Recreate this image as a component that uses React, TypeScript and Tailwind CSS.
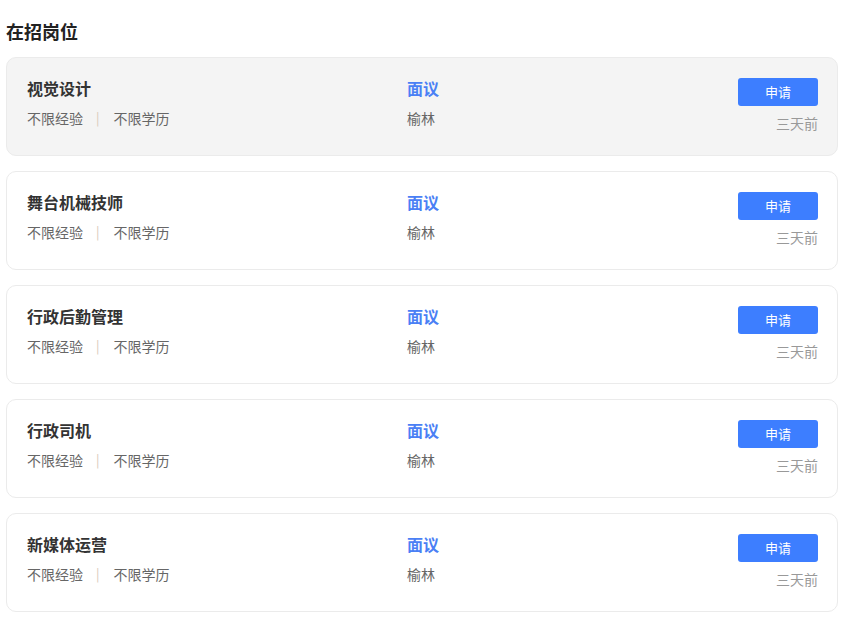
import React from "react";

const jobs = ["视觉设计", "舞台机械技师", "行政后勤管理", "行政司机", "新媒体运营"];

export default function App() {
  return (
    <div
      className="bg-white w-[844px] min-h-[631px] px-[6px] pt-[18px]"
      style={{ fontFamily: '"Noto Sans CJK SC", "Noto Sans", sans-serif' }}
    >
      <h2 className="text-[18px] font-bold text-[#222] leading-[26px] mb-[13px]">在招岗位</h2>
      <div className="flex flex-col gap-[15px]">
        {jobs.map((j, i) => (
          <div
            key={j}
            className={`h-[99px] rounded-[10px] border border-[#ebebeb] pl-[20px] pr-[19px] pt-[20px] flex ${
              i === 0 ? "bg-[#f4f4f4]" : "bg-white"
            }`}
          >
            <div className="w-[380px] flex flex-col">
              <div className="text-[16px] font-bold text-[#333] leading-[20px]">{j}</div>
              <div className="mt-[10px] text-[14px] text-[#666] leading-[20px] flex items-center">
                <span>不限经验</span>
                <span className="ml-[13px] mr-[14px] text-[#d8c8b8] text-[13px]">|</span>
                <span>不限学历</span>
              </div>
            </div>
            <div className="flex-1 flex flex-col">
              <div className="text-[16px] font-bold text-[#4a80f5] leading-[20px]">面议</div>
              <div className="mt-[10px] text-[14px] text-[#666] leading-[20px]">榆林</div>
            </div>
            <div className="flex flex-col items-end">
              <button className="w-[80px] h-[28px] rounded-[3px] bg-[#3d7eff] text-white text-[13px] leading-[28px]">
                申请
              </button>
              <div className="mt-[7px] text-[14px] text-[#999] leading-[20px]">三天前</div>
            </div>
          </div>
        ))}
      </div>
    </div>
  );
}
